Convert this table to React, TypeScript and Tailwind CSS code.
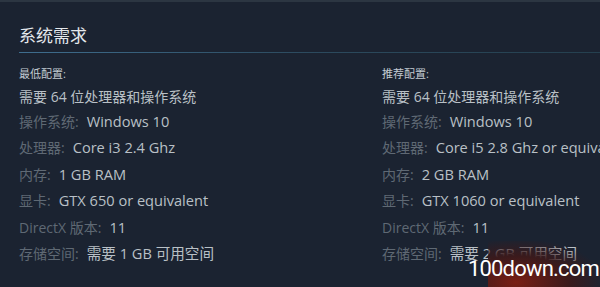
const MIN_SPECS = [
  { label: "操作系统:", value: "Windows 10" },
  { label: "处理器:", value: "Core i3 2.4 Ghz" },
  { label: "内存:", value: "1 GB RAM" },
  { label: "显卡:", value: "GTX 650 or equivalent" },
  { label: "DirectX 版本:", value: "11" },
  { label: "存储空间:", value: "需要 1 GB 可用空间" },
]

const REC_SPECS = [
  { label: "操作系统:", value: "Windows 10" },
  { label: "处理器:", value: "Core i5 2.8 Ghz or equivalent" },
  { label: "内存:", value: "2 GB RAM" },
  { label: "显卡:", value: "GTX 1060 or equivalent" },
  { label: "DirectX 版本:", value: "11" },
  { label: "存储空间:", value: "需要 2 GB 可用空间" },
]

function SpecColumn({ title, specs }: { title: string; specs: { label: string; value: string }[] }) {
  return (
    <div className="flex flex-col whitespace-nowrap">
      <div className="h-[16px] text-[11px] leading-[16px] text-[#c3cbd2]">{title}</div>
      <div className="mt-[6px] h-[24px] text-[14px] leading-[18px] text-[#b9c0c6]">需要 64 位处理器和操作系统</div>
      {specs.map((s) => (
        <div key={s.label} className="flex h-[26.4px] items-baseline text-[14px] leading-[18px]">
          <span className="text-[#5f6974]">{s.label}</span>
          <span className="ml-[8px] text-[14.6px] text-[#b9c0c6]">{s.value}</span>
        </div>
      ))}
    </div>
  )
}

export default function App() {
  return (
    <div
      className="relative h-[287px] w-[600px] overflow-hidden border-t-2 border-[#2c3642] bg-[#1b2331]"
      style={{ fontFamily: '"Open Sans", "Noto Sans CJK SC", sans-serif' }}
    >
      <div className="pl-[19px] pt-[22px]">
        <h2 className="text-[17px] leading-[24px] text-[#e4e8ec]">系统需求</h2>
        <div className="mt-[4px] h-px bg-gradient-to-r from-[#3f6e8f] via-[#2c4a5e] to-[#25404f]" />
        <div className="mt-[13px] grid grid-cols-[363px_1fr]">
          <SpecColumn title="最低配置:" specs={MIN_SPECS} />
          <SpecColumn title="推荐配置:" specs={REC_SPECS} />
        </div>
      </div>

      {/* watermark */}
      <div className="absolute bottom-0 right-0 h-[46px] w-[112px] bg-[radial-gradient(ellipse_at_25%_90%,#7a1e14_0%,#3a1a1c_45%,transparent_75%)]" />
      <div
        className="absolute bottom-[6px] right-[1px] text-[22px] leading-[24px] tracking-[-0.8px] text-white"
        style={{ fontFamily: '"Liberation Sans Narrow", "Roboto", sans-serif' }}
      >
        100down.com
      </div>
    </div>
  )
}
